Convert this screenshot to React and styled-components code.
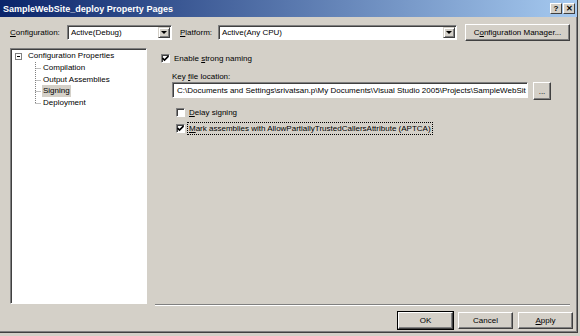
import React from 'react'
import styled, { createGlobalStyle } from 'styled-components'

const GlobalStyle = createGlobalStyle`
  html, body {
    margin: 0;
    padding: 0;
    background: #d4d0c8;
  }
  body {
    font-family: "Liberation Sans", Arial, sans-serif;
    font-size: 8px;
    color: #000;
  }
`

const Window = styled.div`
  width: 578px;
  height: 333px;
  box-sizing: border-box;
  background: #d4d0c8;
  border-right: 1px solid #404040;
  border-bottom: 1px solid #404040;
  box-shadow: inset -1px -1px #808080;
  display: flex;
  flex-direction: column;
`

const TitleBar = styled.div`
  height: 17px;
  flex: none;
  display: flex;
  align-items: center;
  justify-content: space-between;
  padding: 0 2px 0 3px;
  background: linear-gradient(to right, #0a246a, #a6caf0);
  color: #fff;
  font-weight: bold;
  font-size: 9px;
`

const TitleButtons = styled.div`
  display: flex;
  gap: 1px;
`

const CaptionButton = styled.div`
  width: 12px;
  height: 11px;
  box-sizing: border-box;
  background: #d4d0c8;
  border: 1px solid;
  border-color: #fff #404040 #404040 #fff;
  color: #000;
  font-size: 8px;
  font-weight: bold;
  line-height: 9px;
  text-align: center;
`

const Toolbar = styled.div`
  height: 20px;
  margin-top: 5px;
  padding-left: 10px;
  display: flex;
  align-items: center;
`

const Label = styled.span`
  width: ${p => p.$width}px;
  flex: none;
  white-space: nowrap;
`

const Combo = styled.div`
  width: ${p => p.$width}px;
  height: 15px;
  box-sizing: border-box;
  background: #fff;
  border: 1px solid;
  border-color: #808080 #fff #fff #808080;
  box-shadow: inset 1px 1px #404040;
  display: flex;
  align-items: center;
  padding-left: 3px;
  margin-right: ${p => p.$gap}px;
`

const ComboText = styled.span`
  flex: 1;
  white-space: nowrap;
`

const DropButton = styled.div`
  width: 12px;
  height: 11px;
  margin-right: 1px;
  box-sizing: border-box;
  background: #d4d0c8;
  border: 1px solid;
  border-color: #d4d0c8 #404040 #404040 #d4d0c8;
  box-shadow: inset 1px 1px #fff, inset -1px -1px #808080;
  display: flex;
  align-items: center;
  justify-content: center;
`

const Arrow = styled.div`
  width: 0;
  height: 0;
  border-left: 3px solid transparent;
  border-right: 3px solid transparent;
  border-top: 3px solid #000;
`

const Button = styled.div`
  width: ${p => p.$width}px;
  height: ${p => p.$height || 17}px;
  box-sizing: border-box;
  background: #d4d0c8;
  border: 1px solid;
  border-color: #fff #404040 #404040 #fff;
  box-shadow: inset -1px -1px #808080;
  display: flex;
  align-items: center;
  justify-content: center;
  white-space: nowrap;
  flex: none;
  ${p => p.$default && 'outline: 1px solid #000;'}
`

const Main = styled.div`
  height: 257px;
  margin-top: 6px;
  padding-left: 10px;
  display: flex;
`

const Tree = styled.div`
  width: 137px;
  height: 256px;
  box-sizing: border-box;
  background: #fff;
  border: 1px solid;
  border-color: #808080 #fff #fff #808080;
  box-shadow: inset 1px 1px #404040;
  padding-top: 1px;
  position: relative;
`

const TreeRow = styled.div`
  height: ${p => (p.$child ? 11.75 : 12)}px;
  display: flex;
  align-items: center;
  padding-left: ${p => (p.$child ? 31 : 4)}px;
  position: relative;
`

const Expander = styled.div`
  width: 7px;
  height: 7px;
  box-sizing: border-box;
  border: 1px solid #808080;
  background: #fff;
  margin-right: 5px;
  display: flex;
  align-items: center;
  justify-content: center;
  &::after {
    content: '';
    width: 3px;
    height: 1px;
    background: #000;
  }
`

const TreeText = styled.span`
  padding: 0 1px;
  line-height: 12px;
  background: ${p => (p.$selected ? '#d4d0c8' : 'transparent')};
  white-space: nowrap;
`

const TreeLines = styled.svg`
  position: absolute;
  left: 0;
  top: 0;
`

const Panel = styled.div`
  flex: none;
  width: 415px;
  margin-left: 8px;
  border-bottom: 1px solid #808080;
  box-shadow: 0 1px #fff;
  padding: 2px 0 0 6px;
  box-sizing: border-box;
`

const CheckRow = styled.div`
  height: 16px;
  display: flex;
  align-items: center;
  gap: 4px;
  margin-left: ${p => p.$indent || 0}px;
`

const Box = styled.div`
  width: 9px;
  height: 9px;
  box-sizing: border-box;
  background: #fff;
  border: 1px solid;
  border-color: #808080 #fff #fff #808080;
  box-shadow: inset 1px 1px #404040;
  flex: none;
  display: flex;
  align-items: center;
  justify-content: center;
`

const Focus = styled.span`
  outline: 1px dotted #000;
  outline-offset: 1px;
  white-space: nowrap;
`

const Group = styled.div`
  padding-left: 11px;
`

const FieldLabel = styled.div`
  margin-top: 6px;
  height: 10px;
  line-height: 10px;
`

const FieldRow = styled.div`
  display: flex;
  align-items: flex-start;
  gap: 5px;
`

const Field = styled.div`
  width: 356px;
  height: 16px;
  box-sizing: border-box;
  background: #fff;
  border: 1px solid;
  border-color: #808080 #fff #fff #808080;
  box-shadow: inset 1px 1px #404040;
  padding-left: 4px;
  display: flex;
  align-items: center;
  white-space: nowrap;
  overflow: hidden;
`

const Options = styled.div`
  margin-top: 4px;
`

const Footer = styled.div`
  flex: 1;
  display: flex;
  justify-content: flex-end;
  align-items: flex-start;
  gap: 5px;
  padding: 7px 4px 0 0;
`

const Check = () => (
  <svg width="7" height="7" viewBox="0 0 7 7">
    <path d="M0.5 3 L2.5 5 L6.5 1" fill="none" stroke="#000" strokeWidth="1.6" />
  </svg>
)

export default function App() {
  return (
    <>
      <GlobalStyle />
      <Window>
        <TitleBar>
          <span>SampleWebSite_deploy Property Pages</span>
          <TitleButtons>
            <CaptionButton>?</CaptionButton>
            <CaptionButton>✕</CaptionButton>
          </TitleButtons>
        </TitleBar>

        <Toolbar>
          <Label $width={57}><u>C</u>onfiguration:</Label>
          <Combo $width={105} $gap={8}>
            <ComboText>Active(Debug)</ComboText>
            <DropButton><Arrow /></DropButton>
          </Combo>
          <Label $width={38}><u>P</u>latform:</Label>
          <Combo $width={239} $gap={8}>
            <ComboText>Active(Any CPU)</ComboText>
            <DropButton><Arrow /></DropButton>
          </Combo>
          <Button $width={105}>C<u>o</u>nfiguration Manager...</Button>
        </Toolbar>

        <Main>
          <Tree>
            <TreeLines width="45" height="110">
              <path d="M24.5 13 V54 M24.5 19.5 H30 M24.5 31.5 H30 M24.5 42.5 H30 M24.5 54.5 H30"
                stroke="#808080" strokeWidth="1" strokeDasharray="1 1" fill="none" />
            </TreeLines>
            <TreeRow>
              <Expander />
              <TreeText>Configuration Properties</TreeText>
            </TreeRow>
            <TreeRow $child><TreeText>Compilation</TreeText></TreeRow>
            <TreeRow $child><TreeText>Output Assemblies</TreeText></TreeRow>
            <TreeRow $child><TreeText $selected>Signing</TreeText></TreeRow>
            <TreeRow $child><TreeText>Deployment</TreeText></TreeRow>
          </Tree>

          <Panel>
            <CheckRow>
              <Box><Check /></Box>
              <span>Enable <u>s</u>trong naming</span>
            </CheckRow>
            <Group>
              <FieldLabel>Key <u>f</u>ile location:</FieldLabel>
              <FieldRow>
                <Field>C:\Documents and Settings\srivatsan.p\My Documents\Visual Studio 2005\Projects\SampleWebSit</Field>
                <Button $width={18} $height={18}>...</Button>
              </FieldRow>
              <Options>
                <CheckRow $indent={4}>
                  <Box />
                  <span><u>D</u>elay signing</span>
                </CheckRow>
                <CheckRow $indent={4}>
                  <Box><Check /></Box>
                  <Focus><u>M</u>ark assemblies with AllowPartiallyTrustedCallersAttribute (APTCA)</Focus>
                </CheckRow>
              </Options>
            </Group>
          </Panel>
        </Main>

        <Footer>
          <Button $width={55} $default>OK</Button>
          <Button $width={55}>Cancel</Button>
          <Button $width={55}><u>A</u>pply</Button>
        </Footer>
      </Window>
    </>
  )
}
